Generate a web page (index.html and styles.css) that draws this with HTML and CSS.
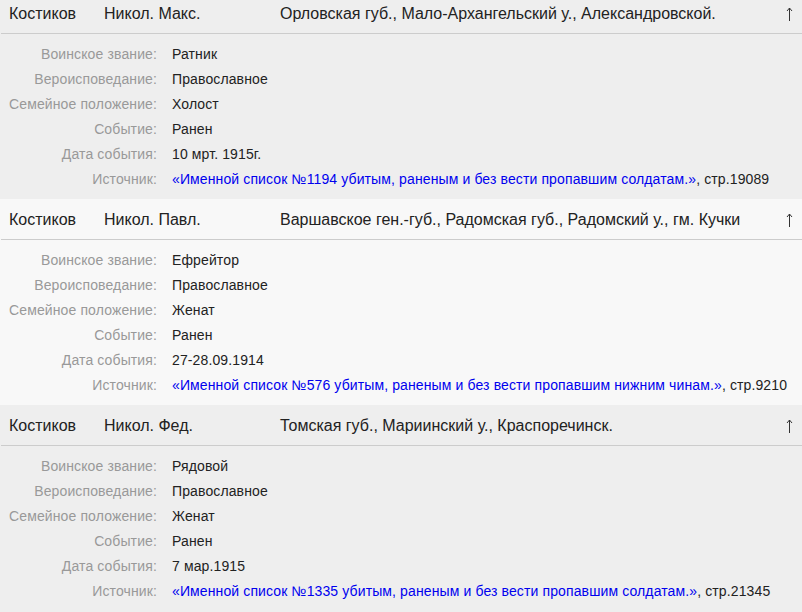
FILE: index.html
```html
<!DOCTYPE html>
<html lang="ru">
<head>
<meta charset="utf-8">
<link rel="stylesheet" href="styles.css">
</head>
<body>
<div class="list">
  <div class="card card-gray">
    <div class="head">
      <span class="surname">Костиков</span>
      <span class="name">Никол. Макс.</span>
      <span class="place">Орловская губ., Мало-Архангельский у., Александровской.</span>
      <svg class="arrow" width="7" height="14" viewBox="0 0 7 14"><path d="M3.5 1V14M1 4L3.5 1L6 4" fill="none" stroke="#333" stroke-width="1"/></svg>
    </div>
    <div class="body">
      <div class="label">Воинское звание:</div><div class="value">Ратник</div>
      <div class="label">Вероисповедание:</div><div class="value">Православное</div>
      <div class="label">Семейное положение:</div><div class="value">Холост</div>
      <div class="label">Событие:</div><div class="value">Ранен</div>
      <div class="label">Дата события:</div><div class="value">10 мрт. 1915г.</div>
      <div class="label">Источник:</div><div class="value"><a class="src" href="#">«Именной список №1194 убитым, раненым и без вести пропавшим солдатам.»</a>, стр.19089</div>
    </div>
  </div>
  <div class="card card-light">
    <div class="head">
      <span class="surname">Костиков</span>
      <span class="name">Никол. Павл.</span>
      <span class="place">Варшавское ген.-губ., Радомская губ., Радомский у., гм. Кучки</span>
      <svg class="arrow" width="7" height="14" viewBox="0 0 7 14"><path d="M3.5 1V14M1 4L3.5 1L6 4" fill="none" stroke="#333" stroke-width="1"/></svg>
    </div>
    <div class="body">
      <div class="label">Воинское звание:</div><div class="value">Ефрейтор</div>
      <div class="label">Вероисповедание:</div><div class="value">Православное</div>
      <div class="label">Семейное положение:</div><div class="value">Женат</div>
      <div class="label">Событие:</div><div class="value">Ранен</div>
      <div class="label">Дата события:</div><div class="value">27-28.09.1914</div>
      <div class="label">Источник:</div><div class="value"><a class="src" href="#">«Именной список №576 убитым, раненым и без вести пропавшим нижним чинам.»</a>, стр.9210</div>
    </div>
  </div>
  <div class="card card-gray">
    <div class="head">
      <span class="surname">Костиков</span>
      <span class="name">Никол. Фед.</span>
      <span class="place">Томская губ., Мариинский у., Краспоречинск.</span>
      <svg class="arrow" width="7" height="14" viewBox="0 0 7 14"><path d="M3.5 1V14M1 4L3.5 1L6 4" fill="none" stroke="#333" stroke-width="1"/></svg>
    </div>
    <div class="body">
      <div class="label">Воинское звание:</div><div class="value">Рядовой</div>
      <div class="label">Вероисповедание:</div><div class="value">Православное</div>
      <div class="label">Семейное положение:</div><div class="value">Женат</div>
      <div class="label">Событие:</div><div class="value">Ранен</div>
      <div class="label">Дата события:</div><div class="value">7 мар.1915</div>
      <div class="label">Источник:</div><div class="value"><a class="src" href="#">«Именной список №1335 убитым, раненым и без вести пропавшим солдатам.»</a>, стр.21345</div>
    </div>
  </div>
</div>
</body>
</html>
```

FILE: styles.css
```css
html, body {
  margin: 0;
  padding: 0;
  background: #eeeeee;
  overflow: hidden;
}
body {
  font-family: "Liberation Sans", Arial, sans-serif;
  color: #222222;
}
.list {
  margin-top: -7px;
}
.card-gray {
  background: #eeeeee;
}
.card-light {
  background: #f8f8f8;
}
.head {
  display: flex;
  align-items: center;
  height: 38px;
  padding: 2px 9px 0 9px;
  margin-left: 1px;
  border-bottom: 1px solid #cccccc;
  font-size: 16px;
}
.head .surname {
  width: 95px;
  margin-left: -1px;
}
.head .name {
  width: 176px;
}
.head .place {
  flex: 1;
}
.head .arrow {
  display: block;
  margin-top: -1px;
}
.body {
  display: grid;
  grid-template-columns: 157px 1fr;
  column-gap: 15px;
  padding: 8px 0 7px;
  font-size: 14px;
  line-height: 25px;
  letter-spacing: 0.12px;
}
.label {
  text-align: right;
  color: #999999;
  white-space: nowrap;
}
.value {
  white-space: nowrap;
  color: #222222;
}
.src {
  color: #0000ee;
  text-decoration: none;
}
```
